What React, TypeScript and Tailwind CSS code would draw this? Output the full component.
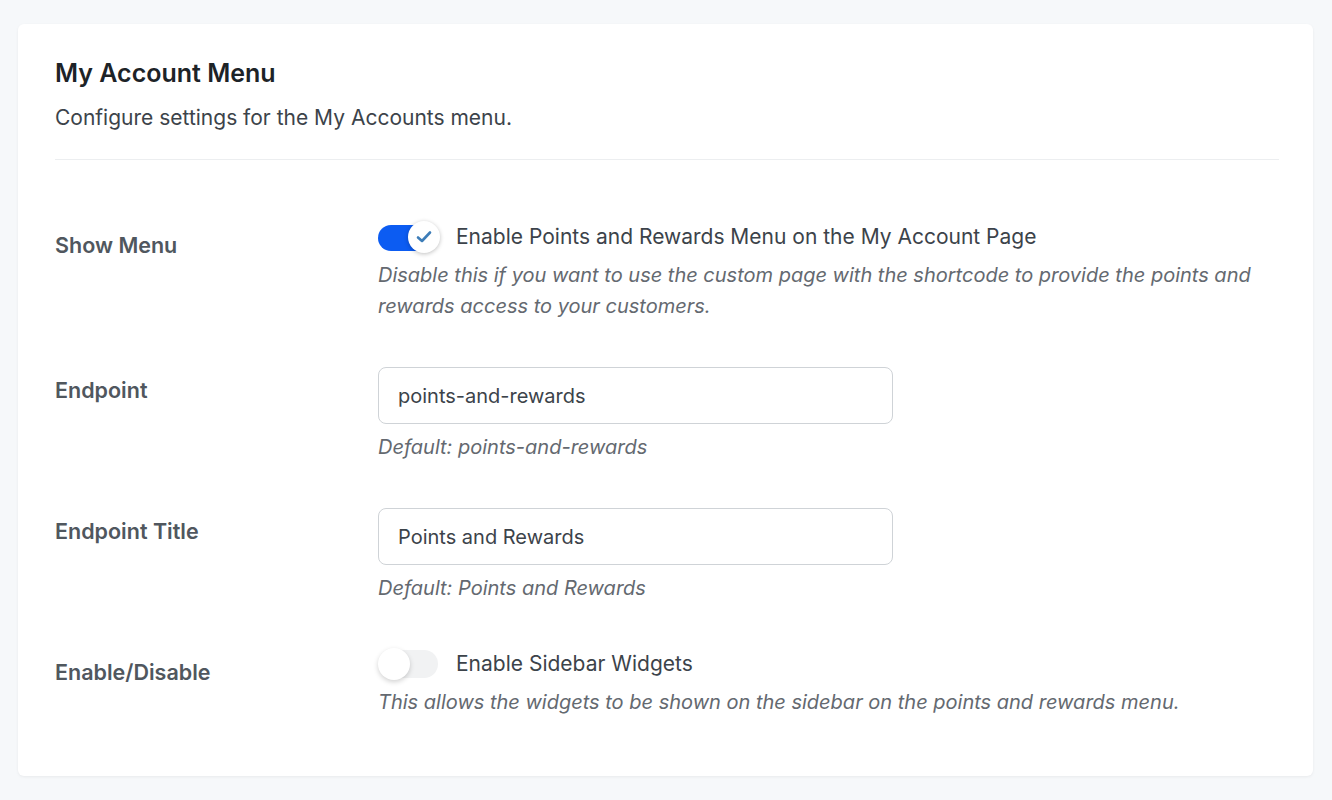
import React from "react";

const font = { fontFamily: "Inter, 'Noto Sans', 'Liberation Sans', sans-serif" };

function Toggle({ on }: { on: boolean }) {
  if (on) {
    return (
      <div className="relative w-[62px] h-[30px] shrink-0">
        <div className="absolute left-0 top-[3px] w-[56px] h-[26px] rounded-full bg-[#0c5cf2]" />
        <div className="absolute left-[30px] top-[-1px] w-[32px] h-[32px] rounded-full bg-white shadow-[0_1px_4px_rgba(0,0,0,0.25)] flex items-center justify-center">
          <svg width="18" height="18" viewBox="0 0 18 18" fill="none">
            <path d="M3 9.5 L7 13 L15 4.5" stroke="#3d7db8" strokeWidth="2.6" strokeLinecap="round" strokeLinejoin="round" />
          </svg>
        </div>
      </div>
    );
  }
  return (
    <div className="relative w-[62px] h-[30px] shrink-0">
      <div className="absolute left-[2px] top-[1px] w-[58px] h-[28px] rounded-full bg-[#f1f2f3]" />
      <div className="absolute left-0 top-[-1px] w-[32px] h-[32px] rounded-full bg-white shadow-[0_2px_5px_rgba(0,0,0,0.18)]" />
    </div>
  );
}

function Row({ label, children }: { label: string; children: React.ReactNode }) {
  return (
    <div className="grid grid-cols-[323px_1fr]">
      <div className="pt-[9px] text-[21.5px] leading-[28px] font-semibold text-[#50575e]">{label}</div>
      <div>{children}</div>
    </div>
  );
}

function Desc({ children }: { children: React.ReactNode }) {
  return <p className="mt-[8px] text-[20px] leading-[31px] italic text-[#646970]">{children}</p>;
}

function Input({ value }: { value: string }) {
  return (
    <div className="w-[515px] h-[57px] rounded-[8px] border border-[#cfd3d7] bg-white flex items-center px-[19px] text-[20px] text-[#3c434a]">
      {value}
    </div>
  );
}

export default function App() {
  return (
    <div className="min-h-[800px] bg-[#f6f8fa] pt-[24px] pl-[18px] pr-[19px] pb-[24px]" style={font}>
      <div className="bg-white rounded-[6px] shadow-[0_1px_3px_rgba(0,0,0,0.06)] pt-[33px] pl-[37px] pr-[34px] pb-[58px]">
        <h1 className="text-[25px] leading-[32px] font-semibold text-[#1d2327]">My Account Menu</h1>
        <p className="mt-[15px] text-[21px] leading-[28px] text-[#3c434a]">Configure settings for the My Accounts menu.</p>
        <div className="mt-[27px] h-px bg-[#eceef0]" />
        <div className="mt-[62px] flex flex-col gap-[45px]">
          <Row label="Show Menu">
            <div className="flex items-center gap-[16px] h-[30px]">
              <Toggle on={true} />
              <span className="text-[21px] text-[#3c434a]">Enable Points and Rewards Menu on the My Account Page</span>
            </div>
            <Desc>
              Disable this if you want to use the custom page with the shortcode to provide the points and rewards access to your customers.
            </Desc>
          </Row>
          <Row label="Endpoint">
            <Input value="points-and-rewards" />
            <Desc>Default: points-and-rewards</Desc>
          </Row>
          <Row label="Endpoint Title">
            <Input value="Points and Rewards" />
            <Desc>Default: Points and Rewards</Desc>
          </Row>
          <Row label="Enable/Disable">
            <div className="flex items-center gap-[16px] h-[30px]">
              <Toggle on={false} />
              <span className="text-[21px] text-[#3c434a]">Enable Sidebar Widgets</span>
            </div>
            <Desc>This allows the widgets to be shown on the sidebar on the points and rewards menu.</Desc>
          </Row>
        </div>
      </div>
    </div>
  );
}
